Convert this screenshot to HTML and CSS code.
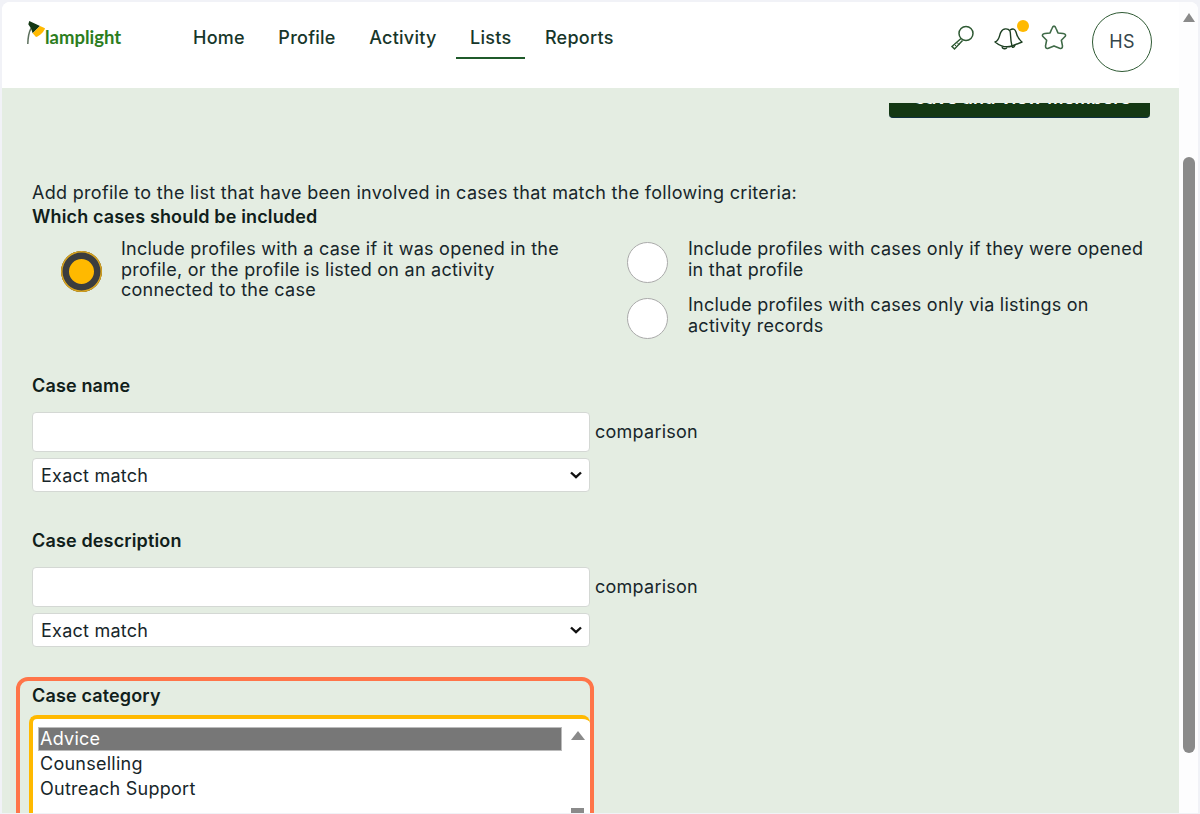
FILE: index.html
```html
<!DOCTYPE html>
<html lang="en">
<head>
	<meta charset="UTF-8">
	<title>Lamplight</title>
	<link rel="stylesheet" href="styles.css">
</head>
<body>
	<div class="frame">
		<div class="page">
			<header class="top">
				<a class="logo">
					<svg width="18" height="26" viewBox="0 0 18 26">
						<path d="M4 7.3C2 11 .9 16 .8 23" fill="none" stroke="#5c6f5c" stroke-width="1.5"/>
						<path d="M2.3 0L13 5L5.7 12.3L4 7.5L1.3 3.3Z" fill="#143814"/>
						<path d="M13 5L18 7.3C17.5 10 13 15 9 16L5.7 12.3Z" fill="#ffb900"/>
					</svg>
					<span class="logo-text">lamplight</span>
				</a>
				<nav class="nav">
					<a>Home</a>
					<a>Profile</a>
					<a>Activity</a>
					<a class="on">Lists</a>
					<a>Reports</a>
				</nav>
				<div class="tools">
					<svg class="tool search" width="26" height="26" viewBox="0 0 26 26" fill="none" stroke="#2f5a34" stroke-width="1.5">
						<circle cx="16" cy="8.5" r="7"/>
						<path d="M11 13.5L2 21.5L4.5 24L12.5 15.5" stroke-width="1.5"/>
						<path d="M4.5 19.5L7 22M7 17.5L9.5 20" stroke-width="1"/>
					</svg>
					<span class="bell">
						<svg width="30" height="26" viewBox="0 0 30 26" fill="none" stroke="#1d3f22" stroke-width="1.4" stroke-linejoin="round">
							<path d="M1 17C6 15 5 10 7 7C9 3 14 3 16 6C17 9 16 14 18 21C12 23 6 21 1 17Z"/>
							<path d="M16 5C19 3 21 4 22 7C23 11 24 14 28 17L18 21"/>
							<path d="M8 21.5C8 24 12 24.5 13 22.5M18 21C18 23 20 23 21 20"/>
						</svg>
						<i class="dot"></i>
					</span>
					<svg class="tool" width="26" height="26" viewBox="1.5 1.5 23 23" fill="none" stroke="#3f6a47" stroke-width="1.4" stroke-linejoin="round">
						<path d="M13 2.5Q14 2.5 15 5L16.5 8.5L21 9Q24 9.5 23 11.5L19.5 15L20.5 20Q20.5 23 18 22L13 20L8 22Q5.5 23 5.5 20L6.5 15L3 11.5Q2 9.5 5 9L9.5 8.5L11 5Q12 2.5 13 2.5Z"/>
					</svg>
					<div class="avatar">HS</div>
				</div>
			</header>
			<main class="main">
				<div class="btn-row"><div class="dark-btn"><span>Save and view members</span></div></div>
				<p class="intro">Add profile to the list that have been involved in cases that match the following criteria:</p>
				<h4 class="label">Which cases should be included</h4>
				<div class="choices">
					<div class="choice first">
						<span class="radio checked"></span>
						<span class="choice-text">Include profiles with a case if it was opened in the profile, or the profile is listed on an activity connected to the case</span>
					</div>
					<div class="choice-col">
						<div class="choice">
							<span class="radio"></span>
							<span class="choice-text">Include profiles with cases only if they were opened in that profile</span>
						</div>
						<div class="choice">
							<span class="radio"></span>
							<span class="choice-text">Include profiles with cases only via listings on activity records</span>
						</div>
					</div>
				</div>

				<h4 class="label field-name">Case name</h4>
				<div class="field-row"><input class="text" type="text"><span class="cmp">comparison</span></div>
				<select class="sel"><option>Exact match</option></select>

				<h4 class="label field-name">Case description</h4>
				<div class="field-row"><input class="text" type="text"><span class="cmp">comparison</span></div>
				<select class="sel"><option>Exact match</option></select>

				<div class="hilite">
					<h4 class="label">Case category</h4>
					<div class="listbox">
						<div class="items">
							<div class="item picked">Advice</div>
							<div class="item">Counselling</div>
							<div class="item">Outreach Support</div>
						</div>
						<div class="list-bar">
							<i class="up"></i>
							<i class="down"></i>
						</div>
					</div>
				</div>
			</main>
		</div>
		<div class="scroll">
			<i class="arrow"></i>
			<i class="thumb"></i>
		</div>
	</div>
</body>
</html>
```

FILE: styles.css
```css
*{margin:0; padding:0; box-sizing:border-box;}
html,body{height:814px; overflow:hidden;}
body{background:#f1f2f7; font-family:"Inter","Noto Sans",sans-serif; font-size:18px; letter-spacing:.25px; color:#17262a; padding:2px 2px 1px 2px;}

.frame{display:flex; height:811px; background:#fff; border-radius:8px 8px 0 0; overflow:hidden;}
.page{width:1177px; height:811px; overflow:hidden; display:flex; flex-direction:column;}

.top{height:86px; flex:none; background:#fff; display:flex; position:relative;}
.logo{display:flex; align-items:flex-start; padding:19px 0 0 25px; width:177px;}
.logo-text{font-family:"Lato",sans-serif; font-size:18.5px; font-weight:700; letter-spacing:0; color:#2c7d1e; margin:4px 0 0 0; line-height:24px;}
.nav{display:flex; gap:5.5px; height:57px;}
.nav a{padding:24px 14px 0; font-weight:500; color:#17362a; height:57px; border-bottom:2px solid transparent; line-height:24px;}
.nav a.on{border-bottom-color:#1f5a2a;}
.tools{margin-left:auto; display:flex; align-items:flex-start; padding:10px 27px 0 0;}
.tool{margin-top:13px;}
.search{margin-right:18px;}
.bell{position:relative; display:block; margin:13px 17px 0 0;}
.dot{position:absolute; right:-5px; top:-5px; width:12px; height:12px; background:#ffb900; border-radius:50%;}
.avatar{width:60px; height:60px; border:1.5px solid #2f5a34; border-radius:50%; margin-left:25px; text-align:center; line-height:57px; font-size:18px; color:#34464b;}

.main{flex:1; background:#e4ede2; padding:0 30px; overflow:hidden;}
.btn-row{display:flex; justify-content:flex-end; height:67px; margin-right:-3px; padding-right:2px;}
.dark-btn{width:261px; height:15px; margin-top:15px; padding-left:6px; background:#143814; border-radius:0 0 4px 4px; border-bottom:1px solid #0e3040; overflow:hidden; text-align:center; color:#fff; font-weight:600; line-height:22px; white-space:nowrap;}
.dark-btn span{display:block; margin-top:-16px;}
.intro{line-height:24px; margin-top:26px; letter-spacing:.3px;}
.label{font-size:18px; font-weight:600; letter-spacing:.15px; color:#10201a; line-height:24px;}

.choices{display:flex; margin-top:10px; height:120px;}
.choice{display:flex; align-items:flex-start; line-height:20.5px;}
.first{width:595px; padding-left:29px;}
.first .radio{margin:12px 19px 0 0;}
.first .choice-text{width:445px;}
.choice-col{width:520px;}
.choice-col .choice{height:56px;}
.choice-col .radio{margin:3px 20px 0 0;}
.choice-col .choice-text{width:462px;}
.radio{flex:none; display:block; width:41px; height:41px; border-radius:50%; background:#fff; border:1px solid #aaa;}
.radio.checked{border:none; background:#ffb900; box-shadow:inset 0 0 0 1.5px #d9a520, inset 0 0 0 8px #3b3d3e;}

.choices + .field-name{margin-top:15px;}
.field-row{display:flex; align-items:center; margin-top:14px;}
.text{width:558px; height:40px; border:1px solid #d4d8d4; border-radius:4px; background:#fff;}
.cmp{margin:-2px 0 0 5px;}
.sel{display:block; appearance:none; width:558px; height:34px; margin-top:6px; border:1px solid #d4d8d4; border-radius:4px; font:18px "Inter","Noto Sans",sans-serif; letter-spacing:.25px; color:#17262a; padding-left:8px;
	background:#fff url("data:image/svg+xml,%3Csvg xmlns='http://www.w3.org/2000/svg' width='12' height='8' viewBox='0 0 12 8'%3E%3Cpath d='M1 1.5L6 6.2L11 1.5' fill='none' stroke='%23111' stroke-width='2.4'/%3E%3C/svg%3E") no-repeat right 7px center;}
.sel + .field-name{margin-top:37px;}

.hilite{width:578px; margin:30px 0 0 -16px; height:200px; border:4px solid #ff7549; border-radius:12px; padding:3px 0 0 12px;}
.listbox{display:flex; margin:7px 0 0 -3px; background:#fff; border:4px solid #ffb900; border-right:0; border-radius:8px 8px 0 0; height:180px; padding:8px 0 0 5px;}
.items{width:524px; flex:none;}
.item{height:25px; line-height:25px; padding-left:2px;}
.item.picked{background:#777; color:#fff; border:1px solid #bbb; padding-left:1px; line-height:22px; height:24px;}
.list-bar{position:relative; flex:1;}
.up{position:absolute; left:9px; top:4px; border:7px solid transparent; border-top:0; border-bottom:9px solid #8a8a8a;}
.down{position:absolute; left:9px; top:81px; width:13px; height:6px; background:#8a8a8a;}

.scroll{flex:1; position:relative; background:#fdfdfe;}
.arrow{position:absolute; left:4px; top:11px; border:6px solid transparent; border-top:0; border-bottom:9px solid #8a8a8a;}
.thumb{position:absolute; left:4px; top:155px; width:12px; height:596px; background:#8a8a8a; border-radius:6px;}
```
